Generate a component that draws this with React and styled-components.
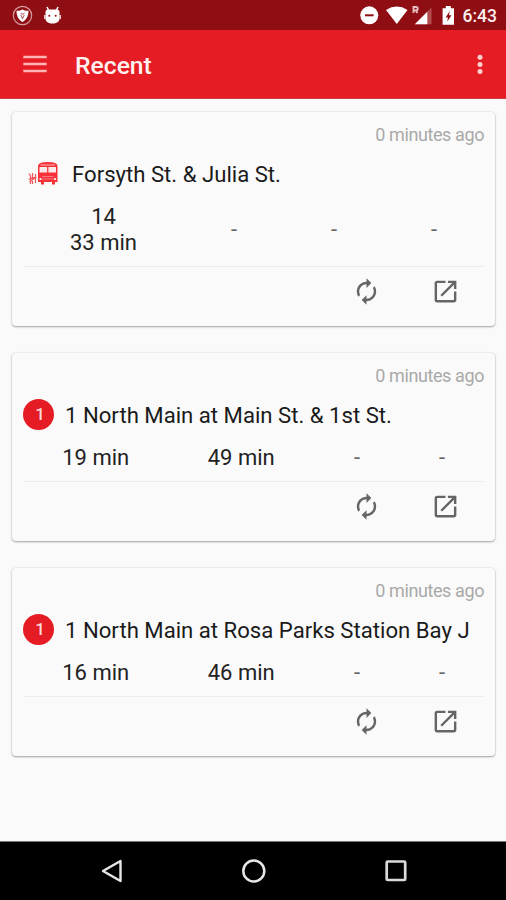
import React from 'react';
import styled, { createGlobalStyle } from 'styled-components';

const GlobalStyle = createGlobalStyle`
  * { box-sizing: border-box; }
  body { margin: 0; background: #fafafa; font-family: Roboto, sans-serif; color: #1c1c1c; }
  svg { display: block; flex: none; }
`;

const Screen = styled.div`
  display: flex;
  flex-direction: column;
  width: 506px;
  height: 900px;
  overflow: hidden;
  background: #fafafa;
`;

const StatusBar = styled.header`
  display: flex;
  align-items: center;
  justify-content: space-between;
  height: 30px;
  padding: 0 9px 0 12px;
  background: #8f0e14;
  color: #fff;
`;

const StatusGroup = styled.div`
  display: flex;
  align-items: center;
  gap: ${(p) => p.$gap}px;
`;

const Clock = styled.span`
  font-size: 17.5px;
  font-weight: 500;
  line-height: 30px;
  color: #fbeeee;
  margin-top: 1px;
`;

const Toolbar = styled.div`
  display: flex;
  align-items: center;
  height: 69px;
  padding: 0 23px 0 23px;
  background: #e51c23;
  border-bottom: 1px solid #cf3a40;
  color: #fff;
`;

const Title = styled.h1`
  flex: 1;
  margin: 4px 0 0 28px;
  font-size: 24.7px;
  font-weight: 500;
  line-height: 30px;
  color: #fff0f0;
`;

const CardList = styled.main`
  flex: 1;
  display: flex;
  flex-direction: column;
  gap: 27px;
  padding: 13px 11px 0 12px;
`;

const Card = styled.article`
  display: flex;
  flex-direction: column;
  height: ${(p) => p.$height}px;
  padding: 10px 11px 0;
  border-radius: 4px;
  background: #fafafa;
  box-shadow: 0 1px 2px rgba(0, 0, 0, 0.32), 0 0 2px rgba(0, 0, 0, 0.16);
`;

const Age = styled.time`
  align-self: flex-end;
  height: 26px;
  font-size: 18px;
  letter-spacing: -0.4px;
  line-height: 26px;
  color: #a9a9a9;
`;

const Stop = styled.div`
  display: flex;
  align-items: center;
  height: 50px;
  gap: ${(p) => p.$gap}px;
  padding-left: ${(p) => p.$inset}px;
`;

const StopName = styled.h2`
  margin: 0;
  padding-top: 2px;
  font-size: 22.15px;
  font-weight: 400;
  line-height: 30px;
  white-space: nowrap;
  color: #1a1a1a;
`;

const RouteBadge = styled.span`
  flex: none;
  width: 31px;
  height: 31px;
  padding-left: 3px;
  border-radius: 50%;
  background: #e51c23;
  color: #fbdada;
  font-size: 17px;
  font-weight: 500;
  line-height: 31px;
  text-align: center;
`;

const Times = styled.div`
  display: grid;
  grid-template-columns: ${(p) => p.$columns};
  align-items: center;
  height: ${(p) => p.$height}px;
  padding-bottom: 4px;
  border-bottom: 1px solid #ececec;
`;

const Time = styled.div`
  font-size: 22px;
  line-height: 26px;
  text-align: center;
  white-space: pre-line;
  color: ${(p) => (p.$empty ? '#666' : '#222')};
`;

const Actions = styled.div`
  display: flex;
  justify-content: flex-end;
  gap: 50px;
  padding: 10px 24px 0 0;
`;

const IconButton = styled.button`
  padding: 0;
  border: 0;
  background: none;
  color: #656565;
`;

const NavBar = styled.nav`
  display: flex;
  align-items: center;
  justify-content: space-between;
  height: 59px;
  padding: 0 99px 0 99px;
  border-top: 1px solid #777;
  background: #000;
`;

const ShieldIcon = () => (
  <svg width="21" height="21" viewBox="0 0 21 21">
    <circle cx="10.5" cy="10.5" r="9.2" fill="none" stroke="#d39a9c" strokeWidth="1.2" />
    <path d="M10.5 4.500c2 1.200 3.700 1.400 6 1.200-.1 5-1.500 8.600-6 11.300-4.500-2.700-5.900-6.300-6-11.300 2.300.2 4 0 6-1.200z" fill="#fff" />
    <path d="M8.500 8.200l2 1 2-1M8.800 10l1.700 3.400L12.200 10" fill="none" stroke="#b86a6d" strokeWidth="1.100" />
  </svg>
);

const DroidIcon = () => (
  <svg width="17" height="19" viewBox="0 0 17 19">
    <path d="M4.500 4L3 1M12.500 4L14 1" stroke="#fff" strokeWidth="1.600" />
    <path d="M1.500 5.500C2 3 5 3.500 8.500 3.500s6.500-.5 7 2v7c0 3.500-3 5-7 5s-7-1.500-7-5z" fill="#fff" />
    <path d="M.8 9v4M16.200 9v4" stroke="#fff" strokeWidth="1.200" />
    <circle cx="5.300" cy="9.700" r="1" fill="#8f0e14" />
    <circle cx="11.700" cy="9.700" r="1" fill="#8f0e14" />
  </svg>
);

const SignalIcons = () => (
  <svg width="96" height="22" viewBox="0 0 96 22">
    <circle cx="9.300" cy="11.300" r="9" fill="#fff" />
    <path d="M5 11.300h8.600" stroke="#8f0e14" strokeWidth="2" />
    <path d="M26 5.900Q36.800-1 47.500 5.900L36.800 20z" fill="#fff" />
    <path d="M71.500 3.500V20.300H54.800z" fill="#c66e72" opacity=".65" />
    <path d="M67.300 7.700V20.300H54.800z" fill="#fff" />
    <path d="M53.500 9V3H56a1.700 1.700 0 0 1 0 3.400H53.500M55.800 6.400L57.500 9" fill="none" stroke="#e6c0c1" strokeWidth="1.900" />
    <path d="M85.800 2h5v2.200h3.200v16.500H82.600V4.200h3.200z" fill="#fff" />
    <path d="M89.800 7L85.600 13.500h2.400l-.8 4.200 4.300-6.500h-2.500z" fill="#8f0e14" />
  </svg>
);

const MenuIcon = () => (
  <svg width="24" height="20" viewBox="0 0 24 20">
    <path d="M.3 3h23.400M.3 10h23.400M.3 17h23.400" stroke="#ffb3b5" strokeWidth="2.500" />
  </svg>
);

const MoreIcon = () => (
  <svg width="6" height="20" viewBox="0 0 6 20">
    <g fill="#ffd0d2">
      <circle cx="3" cy="3.300" r="2.500" />
      <circle cx="3" cy="10.500" r="2.500" />
      <circle cx="3" cy="17.500" r="2.500" />
    </g>
  </svg>
);

const BusIcon = () => (
  <svg width="31" height="24" viewBox="0 0 31 24">
    <path d="M10 5Q10 1 19.800 1T29.500 5v16h-2.500v2.500h-3V21h-8v2.500h-3V21h-3z" fill="#f73238" />
    <path d="M12.500 4h14.500" stroke="#fbb6b7" strokeWidth="1" />
    <path d="M11.500 6h7.600v5.500h-7.600zM20.400 6H28v5.500h-7.600z" fill="#fdeaea" />
    <path d="M14 15.500h11.500M14 18h11.500" stroke="#fa8c8e" strokeWidth=".8" />
    <circle cx="12.500" cy="18" r="1.100" fill="#fff" />
    <circle cx="27" cy="18" r="1.100" fill="#fff" />
    <path d="M1 12.500l1.500 2.500v8M4.500 12v11M7.500 13v9M.5 18l8-2M1.500 21l6.500-5" fill="none" stroke="#f4555a" strokeWidth="1.200" />
  </svg>
);

const RefreshIcon = () => (
  <svg width="29" height="29" viewBox="0 0 24 24" fill="currentColor">
    <path d="M12 6v3l4-4-4-4v3c-4.420 0-8 3.580-8 8 0 1.570.46 3.030 1.240 4.260L6.700 14.800c-.45-.83-.7-1.790-.7-2.800 0-3.310 2.690-6 6-6zm6.760 1.740L17.300 9.200c.44.84.7 1.790.7 2.800 0 3.310-2.690 6-6 6v-3l-4 4 4 4v-3c4.420 0 8-3.580 8-8 0-1.570-.46-3.030-1.240-4.260z" />
  </svg>
);

const OpenIcon = () => (
  <svg width="29" height="29" viewBox="0 0 24 24" fill="currentColor">
    <path d="M19 19H5V5h7V3H5c-1.110 0-2 .9-2 2v14c0 1.100.89 2 2 2h14c1.100 0 2-.9 2-2v-7h-2v7zM14 3v2h3.590l-9.830 9.830 1.410 1.410L19 6.410V10h2V3h-7z" />
  </svg>
);

const BackIcon = () => (
  <svg width="24" height="26" viewBox="0 0 24 26">
    <path d="M21.500 3v20L4 13z" fill="none" stroke="#e8e8e8" strokeWidth="2.400" strokeLinejoin="round" />
  </svg>
);

const HomeIcon = () => (
  <svg width="26" height="26" viewBox="0 0 26 26">
    <circle cx="12.800" cy="13" r="10.500" fill="none" stroke="#e8e8e8" strokeWidth="2.500" />
  </svg>
);

const RecentsIcon = () => (
  <svg width="22" height="22" viewBox="0 0 22 22">
    <rect x="1.700" y="1.500" width="18.500" height="18.500" rx="1" fill="none" stroke="#dadada" strokeWidth="2.700" />
  </svg>
);

const stops = [
  { name: 'Forsyth St. & Julia St.', times: ['14\n33 min', '-', '-', '-'], columns: '161px repeat(3, 100px)', height: 214, timesHeight: 69 },
  { route: '1', name: '1 North Main at Main St. & 1st St.', times: ['19 min', '49 min', '-', '-'], columns: '145.5px 145.5px 86px 84px', height: 188, timesHeight: 43 },
  { route: '1', name: '1 North Main at Rosa Parks Station Bay J', times: ['16 min', '46 min', '-', '-'], columns: '145.5px 145.5px 86px 84px', height: 188, timesHeight: 43 },
];

function StopCard({ stop }) {
  return (
    <Card $height={stop.height}>
      <Age>0 minutes ago</Age>
      <Stop $gap={stop.route ? 11 : 13} $inset={stop.route ? 0 : 5}>
        {stop.route ? <RouteBadge>{stop.route}</RouteBadge> : <BusIcon />}
        <StopName>{stop.name}</StopName>
      </Stop>
      <Times $columns={stop.columns} $height={stop.timesHeight}>
        {stop.times.map((t, i) => (
          <Time key={i} $empty={t === '-'}>{t}</Time>
        ))}
      </Times>
      <Actions>
        <IconButton aria-label="Refresh"><RefreshIcon /></IconButton>
        <IconButton aria-label="Open"><OpenIcon /></IconButton>
      </Actions>
    </Card>
  );
}

export default function App() {
  return (
    <Screen>
      <GlobalStyle />
      <StatusBar>
        <StatusGroup $gap={11}>
          <ShieldIcon />
          <DroidIcon />
        </StatusGroup>
        <StatusGroup $gap={7}>
          <SignalIcons />
          <Clock>6:43</Clock>
        </StatusGroup>
      </StatusBar>
      <Toolbar>
        <MenuIcon />
        <Title>Recent</Title>
        <MoreIcon />
      </Toolbar>
      <CardList>
        {stops.map((stop) => (
          <StopCard key={stop.name} stop={stop} />
        ))}
      </CardList>
      <NavBar>
        <BackIcon />
        <HomeIcon />
        <RecentsIcon />
      </NavBar>
    </Screen>
  );
}
